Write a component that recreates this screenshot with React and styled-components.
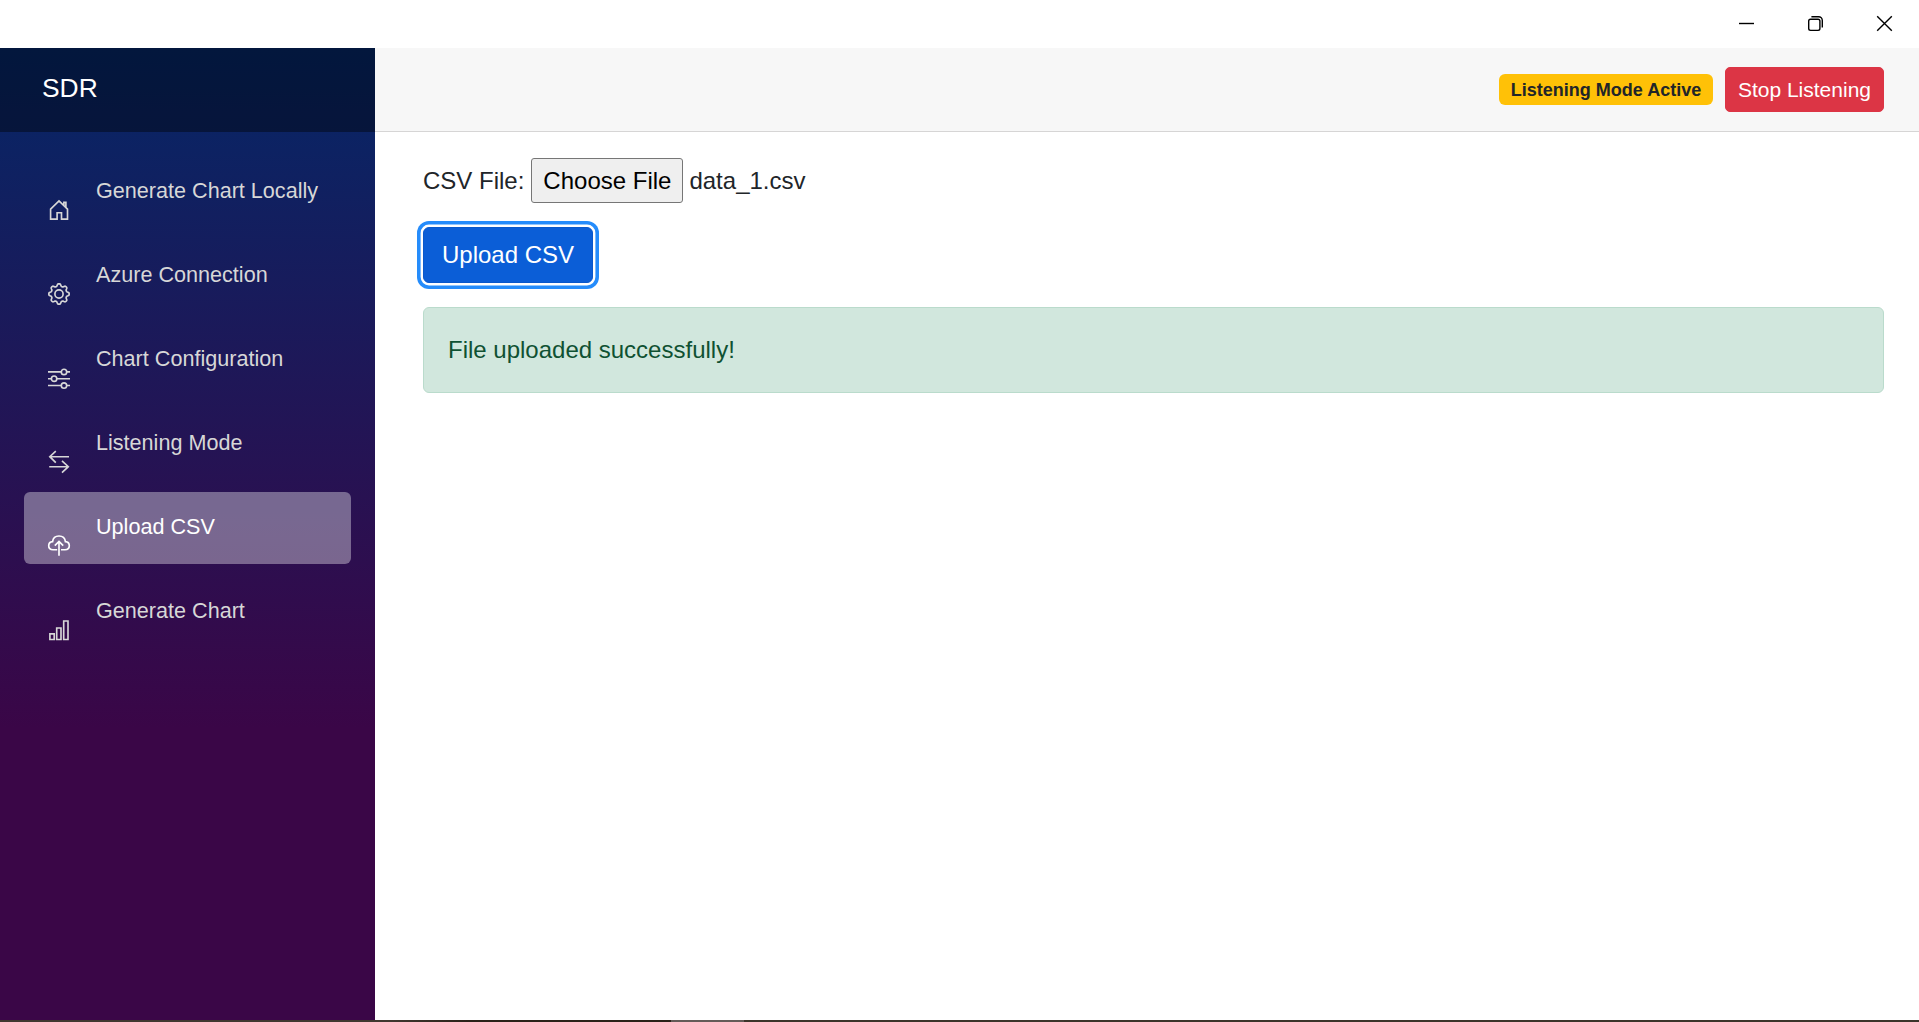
import React from "react";
import styled, { createGlobalStyle } from "styled-components";

const GlobalStyle = createGlobalStyle`
  *, *::before, *::after { box-sizing: border-box; }
  body {
    margin: 0;
    background: #fff;
    color: #212529;
    font-family: "Helvetica Neue", "Liberation Sans", Arial, sans-serif;
    font-size: 24px;
    line-height: 36px;
    overflow: hidden;
  }
`;

const Window = styled.div`
  display: flex;
  flex-direction: column;
  height: 100vh;
`;

const TitleBar = styled.div`
  display: flex;
  justify-content: flex-end;
  flex: none;
  height: 48px;
`;

const WindowButton = styled.button`
  display: flex;
  align-items: center;
  justify-content: center;
  width: 69px;
  height: 47px;
  padding: 0;
  border: 0;
  background: none;
`;

const Page = styled.div`
  display: flex;
  flex: 1;
  min-height: 0;
`;

const Sidebar = styled.aside`
  flex: none;
  width: 375px;
  background: linear-gradient(180deg, rgb(5, 39, 103) 0%, #3a0647 70%);
`;

const Brand = styled.div`
  display: flex;
  align-items: center;
  height: 84px;
  padding: 0 0 4px 42px;
  background: rgba(0, 0, 0, 0.4);
  color: #fff;
  font-size: 26.4px;
`;

const Nav = styled.nav`
  display: flex;
  flex-direction: column;
  gap: 12px;
  padding: 24px;
`;

const NavItem = styled.a`
  display: flex;
  align-items: flex-start;
  gap: 25px;
  height: 72px;
  padding-left: 23px;
  border-radius: 6px;
  background: ${(p) => (p.$active ? "rgba(255, 255, 255, 0.37)" : "transparent")};
  color: ${(p) => (p.$active ? "#fff" : "#d7d7d7")};
  font-size: 21.6px;
  line-height: 70px;
  white-space: nowrap;
`;

const NavIcon = styled.svg`
  flex: none;
  width: 24px;
  height: 24px;
  margin-top: 42px;
  fill: none;
  stroke: currentColor;
  stroke-width: 1.65;
`;

const Main = styled.main`
  flex: 1;
  min-width: 0;
`;

const TopRow = styled.header`
  display: flex;
  align-items: center;
  justify-content: flex-end;
  gap: 12px;
  height: 84px;
  padding-right: 35px;
  background: #f7f7f7;
  border-bottom: 1px solid #d6d5d5;
`;

const Badge = styled.span`
  padding: 6.3px 11.7px;
  border-radius: 6px;
  background: #ffc107;
  color: #212529;
  font-size: 18px;
  font-weight: 700;
  line-height: 18px;
`;

const StopButton = styled.button`
  height: 45px;
  padding: 0 12px;
  border: 1px solid #dc3545;
  border-radius: 5px;
  background: #dc3545;
  color: #fff;
  font: inherit;
  font-size: 21px;
  line-height: 31px;
`;

const Content = styled.section`
  display: flex;
  flex-direction: column;
  align-items: flex-start;
  gap: 24px;
  padding: 26px 35px 0 48px;
`;

const FileRow = styled.div`
  display: flex;
  align-items: center;
  height: 45px;
`;

const FileLabel = styled.label`
  margin-right: 7px;
`;

const FileButton = styled.button`
  height: 45px;
  margin-right: 6px;
  padding: 0 11px;
  border: 1px solid #767676;
  border-radius: 3px;
  background: #efefef;
  color: #000;
  font: inherit;
`;

const UploadButton = styled.button`
  height: 56px;
  padding: 0 18px;
  border: 1px solid #0a58ca;
  border-radius: 6px;
  background: #0b5ed7;
  box-shadow: 0 0 0 2.4px #fff, 0 0 0 6px #258cfb;
  color: #fff;
  font: inherit;
`;

const Alert = styled.div`
  align-self: stretch;
  padding: 24px;
  border: 1px solid #badbcc;
  border-radius: 6px;
  background: #d1e7dd;
  color: #0f5132;
`;

const TaskbarEdge = styled.div`
  flex: none;
  height: 2px;
  background: linear-gradient(90deg, #403830 0 390px, #2a2219 470px 671px, #645b58 671px 744px, #3b342a 744px);
`;

const gearPath =
  Array.from({ length: 96 }, (_, i) => {
    const a = (i / 96) * Math.PI * 2;
    const r = 9.05 + 1.2 * Math.tanh(1.7 * Math.cos(8 * a));
    return `${i ? "L" : "M"}${(12 + r * Math.cos(a)).toFixed(2)} ${(12 + r * Math.sin(a)).toFixed(2)}`;
  }).join("") + "Z";

const items = [
  {
    label: "Generate Chart Locally",
    icon: <path d="M3.6 11.2 12 2.9l8.5 8.3v9.9h-6v-6.4h-4.4v6.4H3.6zM16.9 7V4.4h2v4.8" />,
  },
  {
    label: "Azure Connection",
    icon: (
      <>
        <path d={gearPath} />
        <circle cx="12" cy="12" r="4.1" />
      </>
    ),
  },
  {
    label: "Chart Configuration",
    icon: (
      <>
        <path d="M1 5.9h13.2M19.8 5.9H23M1 12.7h3.2M9.8 12.7H23M1 19.5h13.2M19.8 19.5H23" />
        <circle cx="17" cy="5.9" r="2.7" />
        <circle cx="7.1" cy="12.7" r="2.7" />
        <circle cx="17" cy="19.5" r="2.7" />
      </>
    ),
  },
  {
    label: "Listening Mode",
    icon: <path d="M22 6.7H2.8M8.8 1.2 2.8 6.7l6 6M2.2 16.7h19.2M15 10.8l6.3 5.9-6.3 5.9" />,
  },
  {
    label: "Upload CSV",
    active: true,
    icon: (
      <path d="M10.2 15.7H6c-2.5 0-4.3-1.6-4.3-3.9 0-2.3 1.6-4.1 3.9-4.2C6 4.3 8.6 2 12 2s6 2.3 6.4 5.6c2.3.1 3.9 1.9 3.9 4.2 0 2.3-1.8 3.9-4.3 3.9h-4M12 21.8V7.6M7.8 11.6 12 7.4l4.2 4.2" />
    ),
  },
  {
    label: "Generate Chart",
    icon: <path d="M2.9 15.9h4.3v5.6H2.9zM9.7 10h4.3v11.5H9.7zM16.7 3h4.3v18.5h-4.3z" />,
  },
];

const Glyph = styled.svg`
  width: 17px;
  height: 17px;
  fill: none;
  stroke: #000;
  stroke-width: 1.4;
`;

export default function App() {
  return (
    <Window>
      <GlobalStyle />
      <TitleBar>
        <WindowButton aria-label="Minimize">
          <Glyph viewBox="0 0 17 17"><path d="M1 8.5h15" /></Glyph>
        </WindowButton>
        <WindowButton aria-label="Restore">
          <Glyph viewBox="0 0 17 17">
            <rect x="1.7" y="4.2" width="11.2" height="11.2" rx="1.8" />
            <path d="M4.4 1.7h7.2a3.7 3.7 0 0 1 3.7 3.7v7.2" />
          </Glyph>
        </WindowButton>
        <WindowButton aria-label="Close">
          <Glyph viewBox="0 0 17 17"><path d="m1.2 1.2 14.6 14.6M15.8 1.2 1.2 15.8" /></Glyph>
        </WindowButton>
      </TitleBar>
      <Page>
        <Sidebar>
          <Brand>SDR</Brand>
          <Nav>
            {items.map((item) => (
              <NavItem key={item.label} $active={item.active}>
                <NavIcon viewBox="0 0 24 24">{item.icon}</NavIcon>
                {item.label}
              </NavItem>
            ))}
          </Nav>
        </Sidebar>
        <Main>
          <TopRow>
            <Badge>Listening Mode Active</Badge>
            <StopButton>Stop Listening</StopButton>
          </TopRow>
          <Content>
            <FileRow>
              <FileLabel>CSV File:</FileLabel>
              <FileButton>Choose File</FileButton>
              <span>data_1.csv</span>
            </FileRow>
            <UploadButton>Upload CSV</UploadButton>
            <Alert>File uploaded successfully!</Alert>
          </Content>
        </Main>
      </Page>
      <TaskbarEdge />
    </Window>
  );
}
